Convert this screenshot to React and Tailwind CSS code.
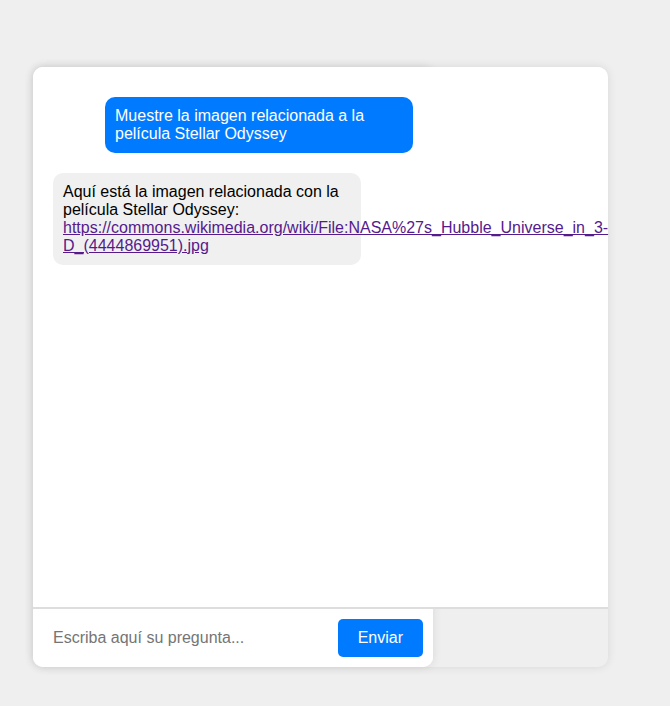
// Chat window: question bubble, answer bubble with a long link, and input bar.
const FONT = { fontFamily: '"Liberation Sans", Arial, sans-serif' };

function Bubble({ from, children }) {
  const isUser = from === 'user';
  return (
    <div
      className={`w-fit max-w-[308px] p-[10px] rounded-[10px] text-[16px] leading-[18px] ${
        isUser ? 'self-end bg-[#007bff] text-white' : 'self-start bg-[#f0f0f0] text-black'
      }`}
    >
      {children}
    </div>
  );
}

export default function App() {
  const url = 'https://commons.wikimedia.org/wiki/File:NASA%27s_Hubble_Universe_in_3-D_(4444869951).jpg';

  return (
    <div className="min-h-screen bg-[#efefef] pt-[67px] pl-[33px]" style={FONT}>
      {/* outer shadow of the overflowing message area */}
      <div className="w-[575px] h-[600px] rounded-[10px] shadow-[0_0_10px_rgba(0,0,0,0.1)]">
        <div className="w-[400px] h-[600px] rounded-[10px] bg-white shadow-[0_0_10px_rgba(0,0,0,0.1)] flex flex-col">
          {/* Messages */}
          <div className="w-[575px] h-[542px] shrink-0 bg-white rounded-t-[10px] border-b-2 border-[#dddddd] pt-[30px] pl-5">
            <div className="w-[360px] flex flex-col gap-5">
              <Bubble from="user">Muestre la imagen relacionada a la película Stellar Odyssey</Bubble>
              <Bubble from="bot">
                Aquí está la imagen relacionada con la película Stellar Odyssey:{' '}
                <a href={url} className="underline text-[#551a8b]">
                  {url}
                </a>
              </Bubble>
            </div>
          </div>

          {/* Input bar */}
          <div className="h-[58px] flex items-center px-[10px] bg-white rounded-b-[10px]">
            <input
              type="text"
              placeholder="Escriba aquí su pregunta..."
              className="flex-1 min-w-0 h-[38px] px-[10px] text-[16px] leading-[18px] outline-none border-none bg-transparent placeholder:text-[#757575]"
              style={FONT}
            />
            <button className="ml-[10px] h-[38px] px-5 rounded-[5px] bg-[#007bff] text-white text-[16px] leading-[18px]" style={FONT}>
              Enviar
            </button>
          </div>
        </div>
      </div>
    </div>
  );
}
